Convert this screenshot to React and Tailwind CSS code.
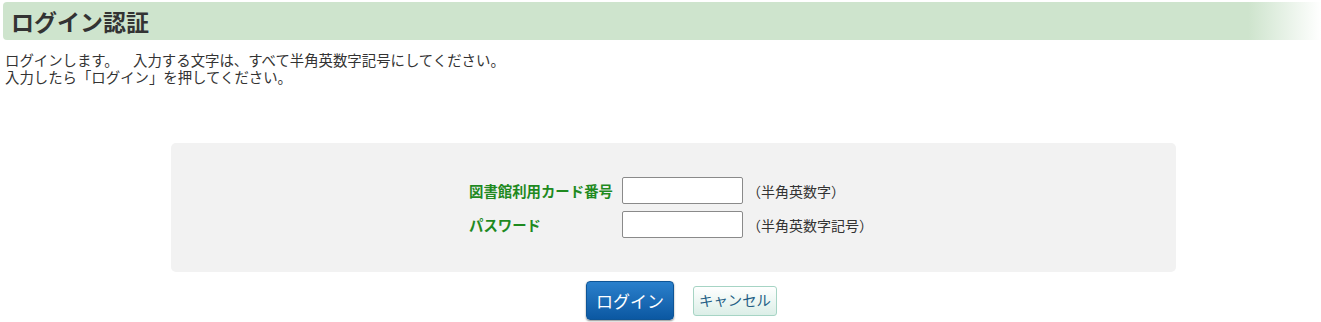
export default function App() {
  return (
    <div className="w-full min-h-[322px] bg-white text-[#333333] font-['Meiryo','Noto_Sans_CJK_JP',sans-serif] [text-spacing-trim:space-all]">
      <div className="ml-[3px] mt-[2px] h-[38px] rounded-l-[4px] bg-[linear-gradient(to_right,#cee4cd_94.5%,#ffffff)] pl-[8px]">
        <h1 className="text-[23px] font-bold leading-[38px] text-[#333333]">ログイン認証</h1>
      </div>
      <div className="mt-[11px] pl-[5px] text-[14.4px] leading-[17px] text-[#333333]">
        <p>ログインします。　入力する文字は、すべて半角英数字記号にしてください。</p>
        <p>入力したら「ログイン」を押してください。</p>
      </div>
      <div className="ml-[171px] mt-[58px] h-[129px] w-[1005px] rounded-[5px] bg-[#f2f2f2] pl-[298px] pt-[34px]">
        <div className="grid grid-cols-[153px_121px_auto] items-center gap-y-[7px]">
          <label className="text-[14.4px] font-bold leading-[18px] text-[#1f8a1f]">図書館利用カード番号</label>
          <input type="text" className="h-[27px] w-[121px] rounded-[2px] border border-[#8a8a8a] bg-white" />
          <span className="pl-[4px] text-[14px] leading-[18px] text-[#333333]">（半角英数字）</span>
          <label className="text-[14.4px] font-bold leading-[18px] text-[#1f8a1f]">パスワード</label>
          <input type="password" className="h-[27px] w-[121px] rounded-[2px] border border-[#8a8a8a] bg-white" />
          <span className="pl-[4px] text-[14px] leading-[18px] text-[#333333]">（半角英数字記号）</span>
        </div>
      </div>
      <div className="ml-[586px] mt-[9px] flex items-center gap-[19px]">
        <button className="flex h-[39px] w-[88px] items-center justify-center rounded-[4px] border border-[#0e5596] bg-linear-to-b from-[#2a80cc] to-[#0b58a2] text-[17px] leading-none text-white shadow-[0_1px_2px_rgba(0,0,0,0.45)]">
          ログイン
        </button>
        <button className="flex h-[30px] w-[84px] items-center justify-center rounded-[3px] border border-[#a6d4c4] bg-linear-to-b from-white to-[#dbeee7] text-[14.4px] leading-none text-[#245f86]">
          キャンセル
        </button>
      </div>
    </div>
  );
}
